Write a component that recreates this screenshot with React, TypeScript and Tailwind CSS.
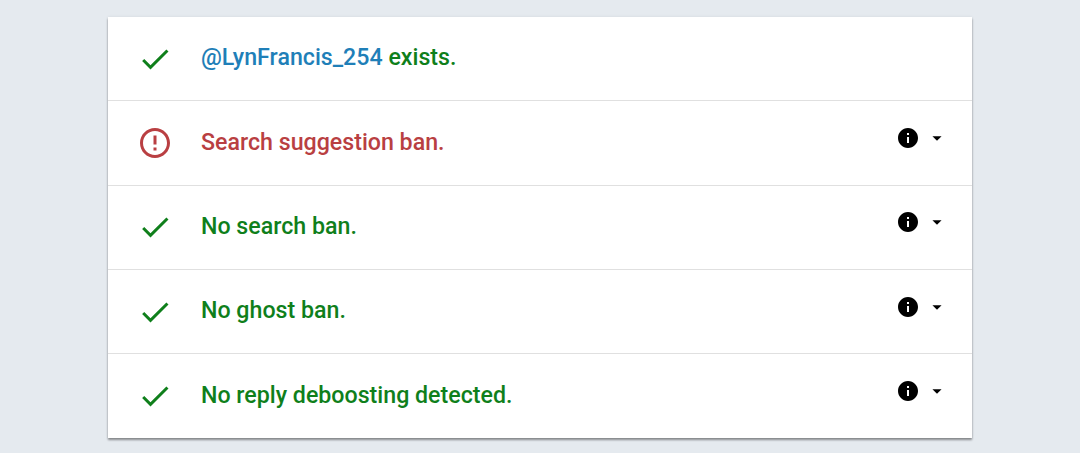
const GREEN = "text-[#0f7f1b]";

function CheckIcon() {
  return (
    <svg viewBox="0 0 24 24" className="h-9 w-9 fill-[#0f7f1b]">
      <path d="M9 16.17L4.83 12l-1.42 1.41L9 19 21 7l-1.41-1.41z" />
    </svg>
  );
}

function ErrorIcon() {
  return (
    <svg viewBox="0 0 24 24" className="h-9 w-9 fill-[#b93f42]">
      <path d="M11 15h2v2h-2zm0-8h2v6h-2zm.99-5C6.47 2 2 6.48 2 12s4.47 10 9.99 10C17.52 22 22 17.52 22 12S17.52 2 11.99 2zM12 20c-4.42 0-8-3.58-8-8s3.58-8 8-8 8 3.58 8 8-3.58 8-8 8z" />
    </svg>
  );
}

function RowActions() {
  return (
    <div className="flex items-center">
      <svg viewBox="0 0 24 24" className="h-6 w-6 fill-black">
        <path d="M12 2C6.48 2 2 6.48 2 12s4.48 10 10 10 10-4.48 10-10S17.52 2 12 2zm1 15h-2v-6h2v6zm0-8h-2V7h2v2z" />
      </svg>
      <svg viewBox="0 0 24 24" className="ml-1.5 h-[22px] w-[22px] fill-black">
        <path d="M7 10l5 5 5-5z" />
      </svg>
    </div>
  );
}

type RowProps = {
  icon: React.ReactNode;
  color?: string;
  actions?: boolean;
  children: React.ReactNode;
};

function Row({ icon, color = GREEN, actions = true, children }: RowProps) {
  return (
    <div className="flex h-[84.3px] items-center border-b border-[#e0e0e0] pl-[29px] pr-6 last:border-b-0">
      <div className="w-[64px] shrink-0">{icon}</div>
      <div className={`mb-0.5 flex-1 text-[23.2px] font-medium ${color}`}>{children}</div>
      {actions ? <div className="-mt-[10px]">
        <RowActions />
      </div> : null}
    </div>
  );
}

export default function App() {
  return (
    <div className="h-[453px] overflow-hidden bg-[#e5eaef] px-[108px] pt-[17px] font-['Roboto',sans-serif]">
      <div className="bg-white shadow-[0_2px_2px_rgba(0,0,0,0.4),0_0_3px_rgba(0,0,0,0.08)]">
        <Row icon={<CheckIcon />} actions={false}>
          <span className="text-[#1f7fb8]">@LynFrancis_254</span> exists.
        </Row>
        <Row icon={<ErrorIcon />} color="text-[#b93f42]">
          Search suggestion ban.
        </Row>
        <Row icon={<CheckIcon />}>No search ban.</Row>
        <Row icon={<CheckIcon />}>No ghost ban.</Row>
        <Row icon={<CheckIcon />}>No reply deboosting detected.</Row>
      </div>
    </div>
  );
}
